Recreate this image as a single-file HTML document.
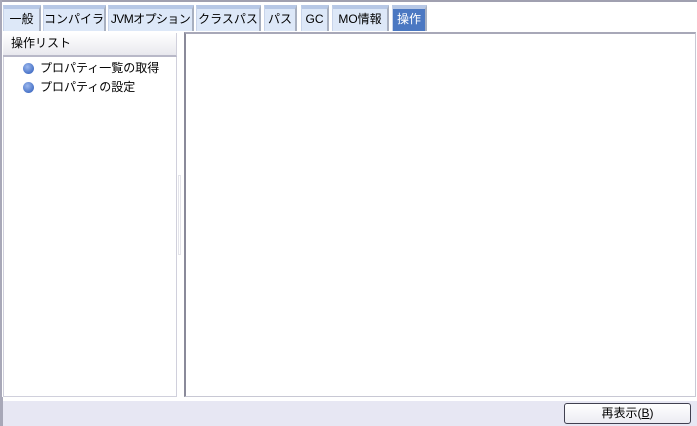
<!DOCTYPE html><html><head><meta charset="utf-8"><style>
*{margin:0;padding:0;box-sizing:border-box}
body{width:697px;height:426px;background:#fff;position:relative;overflow:hidden;font-family:"Liberation Sans","Noto Sans CJK JP",sans-serif;font-size:12px;color:#000}
.a{position:absolute}
.tab{position:absolute;top:5px;height:26px;background:#dde8f8;border-top:4px solid #b7c8e6;border-right:2px solid #a8b0c0;border-left:1px solid #c8d4ea;text-align:center;line-height:21px;font-size:12px;white-space:nowrap;overflow:visible}
.sel{background:#4b78c2;color:#fff;border-top-color:#b7c8e6}
.dot{position:absolute;left:23px;width:11px;height:11px;border-radius:50%;background:radial-gradient(circle at 40% 35%,#9cb8ee,#4a74c8 70%,#3a5ca8)}
</style></head><body>
<div class="a" style="left:0;top:0;width:697px;height:2px;background:#a0a0b0"></div>
<div class="a" style="left:0;top:0;width:2px;height:426px;background:#a8a8b8"></div>
<div class="tab" style="left:3px;width:38px">一般</div>
<div class="tab" style="left:43px;width:63px">コンパイラ</div>
<div class="tab" style="left:108px;width:86px;letter-spacing:-0.6px">JVMオプション</div>
<div class="tab" style="left:196px;width:65px">クラスパス</div>
<div class="tab" style="left:264px;width:33px">パス</div>
<div class="tab" style="left:301px;width:28px">GC</div>
<div class="tab" style="left:332px;width:57px">MO情報</div>
<div class="tab sel" style="left:392px;width:35px">操作</div>
<div class="a" style="left:3px;top:33px;width:174px;height:364px;border:1px solid #d0d0dc;border-top:none;background:#fff"></div>
<div class="a" style="left:3px;top:33px;width:174px;height:24px;background:linear-gradient(#fff,#e8e8ee);border-bottom:2px solid #b8b8c8;border-right:1px solid #d0d0dc;padding-left:8px;line-height:20px">操作リスト</div>
<div class="dot" style="top:63px"></div>
<div class="a" style="left:40px;top:60px;line-height:16px">プロパティ一覧の取得</div>
<div class="dot" style="top:82px"></div>
<div class="a" style="left:40px;top:79px;line-height:16px">プロパティの設定</div>
<div class="a" style="left:178px;top:175px;width:3px;height:80px;border:1px solid #e4e4ea"></div>
<div class="a" style="left:184px;top:32px;width:512px;height:365px;border:1px solid #c8c8d4;border-left:2px solid #8a8a9a;border-top:2px solid #a8a8b8"></div>
<div class="a" style="left:0;top:401px;width:697px;height:25px;background:#e7e7f3"></div>
<div class="a" style="left:0;top:397px;width:3px;height:29px;background:#a8a8b8"></div>
<div class="a" style="left:564px;top:403px;width:127px;height:21px;border:1px solid #404050;border-radius:3px;background:linear-gradient(#fff,#ececf2);text-align:center;line-height:18px;font-size:12px">再表示(<u>B</u>)</div>
</body></html>
